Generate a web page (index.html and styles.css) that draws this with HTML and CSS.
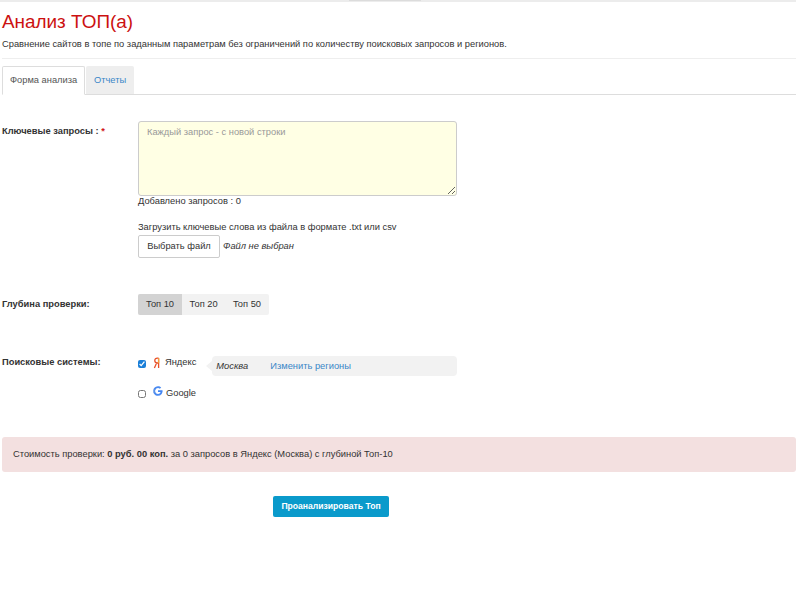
FILE: index.html
```html
<!DOCTYPE html>
<html lang="ru">
<head>
<meta charset="utf-8">
<title>Анализ ТОП(а)</title>
<link rel="stylesheet" href="styles.css">
</head>
<body>
<div class="topbar"><div class="topbar-tab"></div></div>
<main class="page">
  <h1 class="title">Анализ ТОП(а)</h1>
  <p class="subtitle">Сравнение сайтов в топе по заданным параметрам без ограничений по количеству поисковых запросов и регионов.</p>
  <nav class="tabs">
    <a class="tab tab-active">Форма анализа</a>
    <a class="tab tab-idle">Отчеты</a>
  </nav>
  <form class="form">
    <div class="row row-keywords">
      <label class="label">Ключевые запросы : <span class="req">*</span></label>
      <div class="field">
        <textarea class="keywords" placeholder="Каждый запрос - с новой строки"></textarea>
        <div class="count">Добавлено запросов : 0</div>
        <div class="upload-text">Загрузить ключевые слова из файла в формате .txt или csv</div>
        <div class="file">
          <button type="button" class="file-btn">Выбрать файл</button>
          <span class="file-name">Файл не выбран</span>
        </div>
      </div>
    </div>
    <div class="row row-depth">
      <label class="label">Глубина проверки:</label>
      <div class="seg">
        <span class="seg-item seg-on">Топ 10</span>
        <span class="seg-item">Топ 20</span>
        <span class="seg-item">Топ 50</span>
      </div>
    </div>
    <div class="row row-engines">
      <label class="label">Поисковые системы:</label>
      <div class="field">
        <div class="engine engine-y">
          <input type="checkbox" class="check" checked>
          <svg class="ico-y" viewBox="0 0 8 12" width="8" height="12"><path d="M5.6 1.2v9.8M5.6 1.2H4.3C2.8 1.2 1.800 2.100 1.800 3.600c0 1.400.9 2.300 2.200 2.400h1.600M3.600 6 1.400 11" fill="none" stroke="#e8502a" stroke-width="1.300"/><path d="M5.600 1.200v5" fill="none" stroke="#f2a33a" stroke-width="1.300"/></svg>
          <span class="engine-name">Яндекс</span>
          <div class="region">
            <em class="region-name">Москва</em>
            <a class="region-link">Изменить регионы</a>
          </div>
        </div>
        <div class="engine engine-g">
          <input type="checkbox" class="check">
          <svg class="ico-g" viewBox="0 0 48 48" width="10" height="10"><path fill="#4285f4" d="M46 24.500c0-1.600-.1-3.100-.4-4.500H24v8.700h12.400c-.5 2.900-2.200 5.300-4.600 6.900v5.700h7.400C43.500 36.300 46 30.900 46 24.500z"/><path fill="#4a8af0" d="M24 47c6.200 0 11.400-2 15.200-5.600l-7.400-5.700c-2 1.400-4.700 2.200-7.800 2.200-6 0-11-4-12.800-9.500H3.500v5.900C7.300 41.800 15 47 24 47z"/><path fill="#5b93e8" d="M11.200 28.400c-.5-1.400-.7-2.900-.7-4.400s.3-3 .7-4.400v-5.900H3.500C2 16.800 1 20.300 1 24s.9 7.200 2.500 10.300l7.700-5.900z"/><path fill="#4a8af0" d="M24 10.100c3.400 0 6.400 1.200 8.800 3.400l6.600-6.600C35.400 3.200 30.200 1 24 1 15 1 7.300 6.200 3.500 13.700l7.700 5.900C13 14.100 18 10.100 24 10.100z"/></svg>
          <span class="engine-name">Google</span>
        </div>
      </div>
    </div>
    <div class="notice">Стоимость проверки: <b>0 руб. 00 коп.</b> за 0 запросов в Яндекс (Москва) с глубиной Топ-10</div>
    <div class="actions"><button type="button" class="submit">Проанализировать Топ</button></div>
  </form>
</main>
</body>
</html>
```
FILE: styles.css
```css
* { box-sizing: border-box; }
html, body { margin: 0; padding: 0; background: #fff; }
body { font-family: "Liberation Sans", Arial, sans-serif; font-size: 9.32px; line-height: 13px; color: #333; height: 600px; overflow: hidden; }
.topbar { height: 2px; width: 796px; margin-left: 0; background: #ececec; display: flex; justify-content: center; }
.topbar-tab { width: 72px; height: 1px; background: #dcdcdc; margin-left: -26px; }
.page { width: 794px; margin-left: 2px; }
.title { margin: 9px 0 0; font-size: 18.900px; line-height: 22px; font-weight: 400; color: #cc1111; }
.subtitle { margin: 5px 0 0; line-height: 13px; color: #333; }
.tabs { display: flex; gap: 1px; margin-top: 7px; padding-top: 7px; border-top: 1px solid #eee; border-bottom: 1px solid #ddd; height: 37px; }
.tab { display: block; height: 28px; padding: 8px 8px 0; border-radius: 2px 2px 0 0; white-space: nowrap; }
.tab-active { width: 83px; color: #555; background: #fff; border: 1px solid #ddd; border-bottom-color: #fff; height: 29px; padding: 7px 7px 0; }
.tab-idle { width: 48px; background: #eee; color: #3a87c8; }
.form { display: block; }
.row { display: flex; }
.label { width: 136px; flex: none; font-weight: 700; color: #333; }
.req { color: #d01818; }
.field { display: block; }
.row-keywords { margin-top: 26px; }
.row-keywords .label { padding-top: 4px; }
.keywords { display: block; width: 319px; height: 75px; padding: 4px 8px; border: 1px solid #ccc; border-radius: 3px; background: #ffffe4; font: inherit; line-height: 13px; color: #333; }
.keywords::placeholder { color: #999; opacity: 1; }
.count { margin-top: -1px; }
.upload-text { margin-top: 13px; }
.file { display: flex; align-items: center; margin-top: 1px; }
.file-btn { width: 82px; height: 23px; padding: 0; border: 1px solid #ccc; border-radius: 2px; background: #fff; font: inherit; color: #333; }
.file-name { margin-left: 3px; font-style: italic; }
.row-depth { margin-top: 36px; align-items: center; }
.seg { display: flex; height: 21px; background: #f2f2f2; border-radius: 2px; }
.seg-item { display: flex; align-items: center; justify-content: center; height: 21px; width: 43.300px; padding: 0; }
.seg-on { background: #d3d3d3; width: 44px; border-radius: 2px 0 0 2px; }
.row-engines { margin-top: 41px; }
.row-engines .label { padding-top: 0; }
.engine { display: flex; align-items: center; }
.check { margin: 0; width: 8px; height: 8px; accent-color: #1a7fd8; flex: none; }
.engine-y { height: 20px; }
.engine-g { margin-top: 7px; height: 20px; }
.engine-y .check { margin-top: -4px; }
.ico-y { margin: -7px 0 0 7px; }
.ico-g { margin: -4px 0 0 7px; }
.engine-y .engine-name { margin-left: 4px; margin-top: -7px; }
.engine-g .engine-name { margin-left: 3px; margin-top: 1px; }
.engine-g .check { margin-top: 2px; }
.region { position: relative; display: flex; align-items: center; width: 245px; height: 20px; margin-left: 16px; padding-left: 4px; background: #f2f2f2; border-radius: 4px; }
.region::before { content: ""; position: absolute; left: -6px; top: 5px; border: 5px solid transparent; border-left-width: 0; border-right: 6px solid #f2f2f2; }
.region-name { width: 54px; font-style: italic; }
.region-link { color: #3a87c8; }
.notice { width: 794px; height: 35px; margin-top: 34px; padding: 11px; background: #f3e0e0; border-radius: 3px; color: #333; }
.actions { display: flex; margin-top: 24px; padding-left: 271px; }
.submit { width: 116px; height: 21px; padding: 0; border: 0; border-radius: 2px; background: #0a9acb; color: #fff; font: inherit; font-size: 8.6px; font-weight: 700; }
```
